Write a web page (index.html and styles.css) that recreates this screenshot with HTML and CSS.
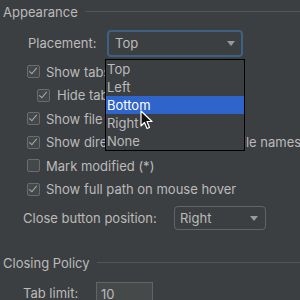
FILE: index.html
```html
<!DOCTYPE html>
<html lang="en">
<head>
    <meta charset="UTF-8">
    <title>Editor Tabs</title>
    <link rel="stylesheet" href="styles.css">
</head>
<body>

<div class="settings">
    <div class="section-title">
        <span>Appearance</span>
        <div class="rule"></div>
    </div>

    <div class="field placement">
        <label class="field-label">Placement:</label>
        <div class="combo focused">
            <span>Top</span>
            <span class="arrow"></span>

            <!-- open dropdown -->
            <div class="popup">
                <div class="item">Top</div>
                <div class="item">Left</div>
                <div class="item selected">Bottom</div>
                <div class="item">Right</div>
                <div class="item">None</div>
            </div>
        </div>
    </div>

    <div class="check-row"><span class="box checked"></span>Show tabs in one row</div>
    <div class="check-row nested"><span class="box checked"></span>Hide tabs if there is no space</div>
    <div class="check-row"><span class="box checked"></span>Show file extension</div>
    <div class="check-row"><span class="box checked"></span>Show directory for non-unique file names</div>
    <div class="check-row"><span class="box"></span>Mark modified (*)</div>
    <div class="check-row"><span class="box checked"></span>Show full path on mouse hover</div>

    <div class="field close-pos">
        <label class="field-label">Close button position:</label>
        <div class="combo small">
            <span>Right</span>
            <span class="arrow"></span>
        </div>
    </div>

    <div class="section-title closing">
        <span>Closing Policy</span>
        <div class="rule"></div>
    </div>

    <div class="field tab-limit">
        <label class="field-label">Tab limit:</label>
        <div class="text-input">10</div>
    </div>
</div>

<svg class="cursor" width="14" height="20" viewBox="0 0 14 20">
    <path d="M1 1 L1 16 L4.5 12.5 L7 18.5 L9.5 17.5 L7 11.5 L12 11.5 Z" fill="#111" stroke="#fff" stroke-width="1.2" stroke-linejoin="round"/>
</svg>

</body>
</html>
```

FILE: styles.css
```css
body {
    margin: 0;
    background-color: #3c3f41;
    color: #bbbbbb;
    font-family: Inter, "Open Sans", sans-serif;
    font-size: 13px;
    overflow: hidden;
}

.settings {
    width: 300px;
    height: 300px;
    position: relative;
}

.section-title {
    display: flex;
    align-items: center;
    height: 24px;
    padding-left: 3px;
}

.section-title .rule {
    flex: 1;
    height: 1px;
    margin-left: 7px;
    margin-top: -1px;
    background-color: #525557;
}

.section-title.closing {
    margin-top: 21px;
}

.field {
    display: flex;
    align-items: center;
    height: 28px;
}

.field-label {
    flex-shrink: 0;
}

.placement {
    margin-top: 5px;
    padding-left: 28px;
}

.placement .field-label {
    width: 79px;
}

.close-pos {
    margin-top: 5px;
    height: 24px;
    padding-left: 23px;
}

.close-pos .field-label {
    width: 151px;
}

.tab-limit {
    margin-top: 6px;
    height: 24px;
    padding-left: 23px;
    align-items: flex-start;
}

.tab-limit .field-label {
    width: 73px;
    line-height: 24px;
}

.combo {
    position: relative;
    display: flex;
    align-items: center;
    box-sizing: border-box;
    width: 136px;
    height: 27px;
    padding-left: 6px;
    border: 1px solid #646464;
    border-radius: 4px;
    background-color: #3c3f41;
}

.combo.focused {
    border: 2px solid #3d6185;
}

.combo.small {
    width: 92px;
    height: 24px;
    padding-left: 5px;
}

.arrow {
    position: absolute;
    right: 6px;
    top: 50%;
    margin-top: -2px;
    width: 0;
    height: 0;
    border-left: 4px solid transparent;
    border-right: 4px solid transparent;
    border-top: 5px solid #9a9a9a;
}

.combo.small .arrow {
    right: 7px;
}

.popup {
    position: absolute;
    left: -4px;
    top: 27px;
    width: 140px;
    box-sizing: border-box;
    border: 1px solid #000;
    background-color: #3c3f41;
    z-index: 2;
}

.item {
    height: 18px;
    line-height: 18px;
    padding-left: 1px;
}

.item.selected {
    background-color: #2f65ca;
    color: #ffffff;
}

.check-row {
    display: flex;
    align-items: center;
    height: 23.5px;
    padding-left: 27px;
    white-space: nowrap;
}

.placement + .check-row {
    margin-top: 3px;
}

.check-row.nested {
    padding-left: 37px;
}

.box {
    position: relative;
    flex-shrink: 0;
    box-sizing: border-box;
    width: 13px;
    height: 13px;
    margin-right: 6px;
    border: 1px solid #6b6b6b;
    border-radius: 2px;
    background-color: #43494a;
}

.check-row.nested .box {
    margin-right: 7px;
}

.box.checked::after {
    content: "";
    position: absolute;
    left: 3px;
    top: 0px;
    width: 3px;
    height: 7px;
    border-right: 1.5px solid #a9a9a9;
    border-bottom: 1.5px solid #a9a9a9;
    transform: rotate(40deg);
}

.text-input {
    box-sizing: border-box;
    width: 57px;
    height: 24px;
    margin-top: 1px;
    padding-left: 4px;
    line-height: 22px;
    border: 1px solid #646464;
    background-color: #45494a;
}

.cursor {
    position: absolute;
    left: 140px;
    top: 110px;
    z-index: 5;
}
```
